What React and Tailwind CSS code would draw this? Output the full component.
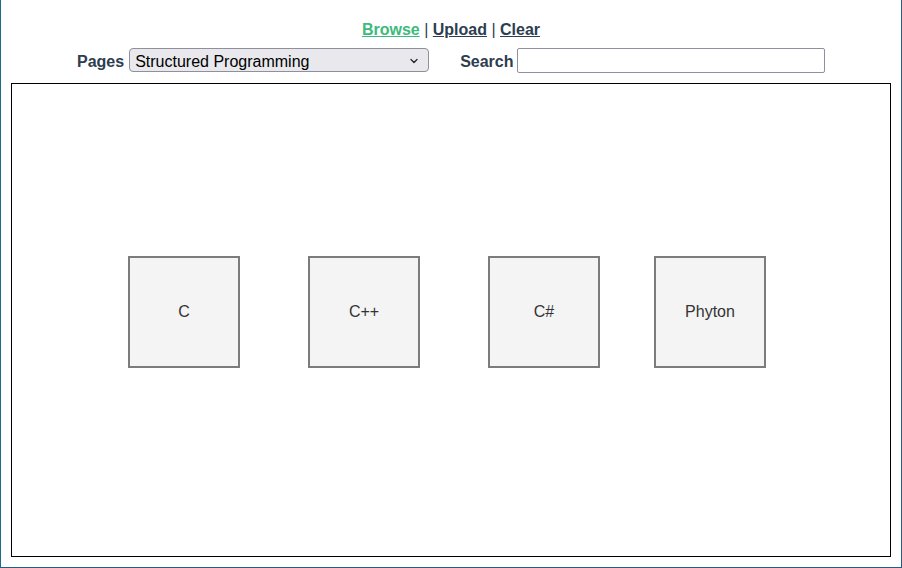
import React from 'react';
import { ChevronDown } from 'lucide-react';

const languages = [
  { name: 'C', gap: 'ml-[116px]' },
  { name: 'C++', gap: 'ml-[68px]' },
  { name: 'C#', gap: 'ml-[68px]' },
  { name: 'Phyton', gap: 'ml-[54px]' },
];

const App = () => {
  return (
    <div
      className="w-[902px] h-[568px] bg-white border-l border-r border-b border-l-[#1d6a89] border-r-[#275a84] border-b-[#275a84] flex flex-col"
      style={{ fontFamily: '"Liberation Sans", Arial, sans-serif' }}
    >
      {/* top nav */}
      <div className="pt-[21px] text-center text-[16px] leading-[18px] font-bold text-[#2c3e50]">
        <a href="#" className="underline text-[#3dba7d]">Browse</a>
        <span className="font-normal"> | </span>
        <a href="#" className="underline">Upload</a>
        <span className="font-normal"> | </span>
        <a href="#" className="underline">Clear</a>
      </div>

      {/* filters */}
      <div className="mt-[9px] flex items-center pl-[76px] h-[25px]">
        <label className="pt-[2px] text-[16px] font-bold text-[#2c3e50]">Pages</label>
        <div className="relative ml-[5px]">
          <select
            className="appearance-none w-[300px] h-[24px] pl-[5px] pr-6 pt-[1px] text-[16px] text-black bg-[#e9e9ed] border border-[#8f8f9d] rounded-[4px]"
            defaultValue="structured"
          >
            <option value="structured">Structured Programming</option>
            <option value="oop">Object Oriented Programming</option>
          </select>
          <ChevronDown size={12} strokeWidth={2.5} className="absolute right-[9px] top-[7px] text-[#222] pointer-events-none" />
        </div>
        <label className="ml-[31px] pt-[2px] text-[16px] font-bold text-[#2c3e50]">Search</label>
        <input
          type="text"
          className="ml-[3px] w-[308px] h-[25px] px-1 bg-white border border-[#8f8f9d] rounded-[2px]"
        />
      </div>

      {/* cards */}
      <div className="mt-[10px] ml-[10px] w-[880px] h-[474px] border border-black flex items-start pt-[172px]">
        {languages.map((lang) => (
          <div
            key={lang.name}
            className={`${lang.gap} w-[112px] h-[112px] shrink-0 bg-[#f4f4f4] border-2 border-[#7c7c7c] flex items-center justify-center text-[16px] text-[#333]`}
          >
            {lang.name}
          </div>
        ))}
      </div>
    </div>
  );
};

export default App;
